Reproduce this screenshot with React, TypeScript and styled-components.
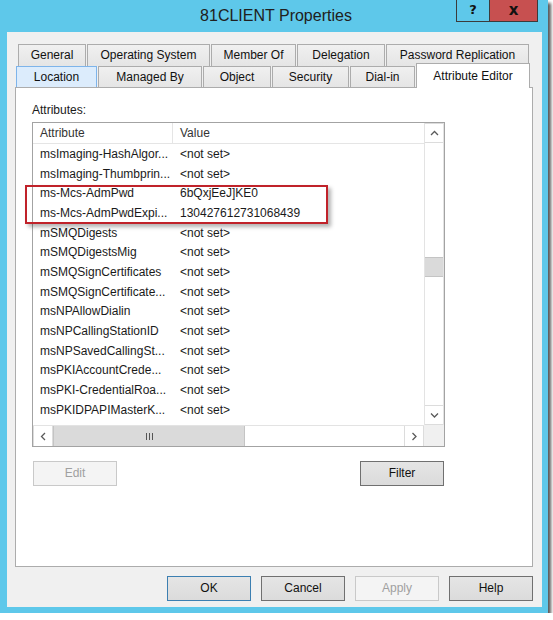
import { FC, ReactElement } from 'react'
import styled, { createGlobalStyle } from 'styled-components'

const FRAME_BLUE = '#5ec8ea'

type Attr = { name: string, value: string }

const attributes: Attr[] = [
  { name: 'msImaging-HashAlgor...', value: '<not set>' },
  { name: 'msImaging-Thumbprin...', value: '<not set>' },
  { name: 'ms-Mcs-AdmPwd', value: '6bQxjEeJ]KE0' },
  { name: 'ms-Mcs-AdmPwdExpi...', value: '130427612731068439' },
  { name: 'mSMQDigests', value: '<not set>' },
  { name: 'mSMQDigestsMig', value: '<not set>' },
  { name: 'mSMQSignCertificates', value: '<not set>' },
  { name: 'mSMQSignCertificate...', value: '<not set>' },
  { name: 'msNPAllowDialin', value: '<not set>' },
  { name: 'msNPCallingStationID', value: '<not set>' },
  { name: 'msNPSavedCallingSt...', value: '<not set>' },
  { name: 'msPKIAccountCrede...', value: '<not set>' },
  { name: 'msPKI-CredentialRoa...', value: '<not set>' },
  { name: 'msPKIDPAPIMasterK...', value: '<not set>' }
]

const backTabs = [
  { label: 'General', width: 68 },
  { label: 'Operating System', width: 123 },
  { label: 'Member Of', width: 85 },
  { label: 'Delegation', width: 88 },
  { label: 'Password Replication', width: 143 }
]

const frontTabs = [
  { label: 'Location', width: 81, hover: true },
  { label: 'Managed By', width: 104 },
  { label: 'Object', width: 68 },
  { label: 'Security', width: 77 },
  { label: 'Dial-in', width: 65 },
  { label: 'Attribute Editor', width: 114, selected: true }
]

const Chevron: FC<{ dir: 'up' | 'down' | 'left' | 'right' }> = ({ dir }) => {
  const points = {
    up: '1,5 4.5,1.5 8,5',
    down: '1,1.5 4.5,5 8,1.5',
    left: '5,1 1.5,4.5 5,8',
    right: '1.5,1 5,4.5 1.5,8'
  }[dir]
  const vertical = dir === 'up' || dir === 'down'
  return (
    <svg width={vertical ? 9 : 7} height={vertical ? 7 : 9}>
      <polyline points={points} fill='none' stroke='#5a5a5a' strokeWidth='1.3' />
    </svg>
  )
}

const App: FC = (): ReactElement => {
  return (
    <>
      <GlobalStyle />
      <Window>
        <TitleBar>
          <Title>81CLIENT Properties</Title>
          <CaptionButtons>
            <CaptionButton>?</CaptionButton>
            <CaptionButton $close>x</CaptionButton>
          </CaptionButtons>
        </TitleBar>
        <Client>
          <TabRow $back>
            {backTabs.map(t => (
              <Tab key={t.label} $width={t.width}>{t.label}</Tab>
            ))}
          </TabRow>
          <TabRow>
            {frontTabs.map(t => (
              <Tab key={t.label} $width={t.width} $front $hover={t.hover} $selected={t.selected}>
                {t.label}
              </Tab>
            ))}
          </TabRow>
          <Page>
            <Label>Attributes:</Label>
            <ListView>
              <ListBody>
                <Header>
                  <HeaderCell $first>Attribute</HeaderCell>
                  <HeaderCell>Value</HeaderCell>
                </Header>
                {attributes.map(a => (
                  <Row key={a.name}>
                    <Cell $first>{a.name}</Cell>
                    <Cell>{a.value}</Cell>
                  </Row>
                ))}
              </ListBody>
              <VScroll>
                <ArrowButton><Chevron dir='up' /></ArrowButton>
                <VTrack>
                  <VThumb />
                </VTrack>
                <ArrowButton><Chevron dir='down' /></ArrowButton>
              </VScroll>
              <HScroll>
                <ArrowButton $horizontal><Chevron dir='left' /></ArrowButton>
                <HThumb>
                  <Grip /><Grip /><Grip />
                </HThumb>
                <HTrack />
                <ArrowButton $horizontal><Chevron dir='right' /></ArrowButton>
              </HScroll>
              <Corner />
              <Highlight />
            </ListView>
            <ActionRow>
              <Button disabled>Edit</Button>
              <Button>Filter</Button>
            </ActionRow>
          </Page>
          <Footer>
            <Button $default>OK</Button>
            <Button>Cancel</Button>
            <Button disabled>Apply</Button>
            <Button>Help</Button>
          </Footer>
        </Client>
      </Window>
    </>
  )
}

const GlobalStyle = createGlobalStyle`
  html, body {
    margin: 0;
    padding: 0;
    background: #fff;
  }
  body {
    font-family: 'Liberation Sans', Arial, sans-serif;
    font-size: 12px;
    color: #1a1a1a;
  }
  * { box-sizing: border-box; }
`
const Window = styled.div`
  width: 548px;
  height: 613px;
  background: ${FRAME_BLUE};
  box-shadow: 3px 3px 3px rgba(0,0,0,0.65);
  display: flex;
  flex-direction: column;
`
const TitleBar = styled.div`
  height: 32px;
  display: grid;
  grid-template-columns: 1fr auto 1fr;
  align-items: start;
`
const Title = styled.div`
  grid-column: 2;
  padding-left: 4px;
  font-size: 16px;
  line-height: 32px;
  color: #202020;
`
const CaptionButtons = styled.div`
  grid-column: 3;
  justify-self: end;
  display: flex;
  margin-right: 10px;
`
const CaptionButton = styled.div<{ $close?: boolean }>`
  width: ${p => p.$close ? 48 : 34}px;
  height: 22px;
  border: 1px solid #3b3b3b;
  border-top: none;
  ${p => p.$close && 'border-left: none;'}
  background: ${p => p.$close ? '#c75050' : FRAME_BLUE};
  display: flex;
  align-items: center;
  justify-content: center;
  font-weight: bold;
  font-family: 'DejaVu Sans', sans-serif;
  font-size: ${p => p.$close ? 15 : 13}px;
  line-height: 18px;
  color: #111;
  padding-bottom: ${p => p.$close ? 2 : 1}px;
`
const Client = styled.div`
  flex: 1;
  margin: 0 6px 6px 7px;
  background: #f0f0f0;
  padding: 12px 9px 0 8px;
  display: flex;
  flex-direction: column;
`
const TabRow = styled.div<{ $back?: boolean }>`
  display: flex;
  gap: 1px;
  height: ${p => p.$back ? 22 : 21}px;
  margin-left: ${p => p.$back ? 3 : 1}px;
`
const Tab = styled.div<{ $width: number, $front?: boolean, $hover?: boolean, $selected?: boolean }>`
  width: ${p => p.$width}px;
  height: ${p => p.$selected ? 25 : p.$front ? 21 : 22}px;
  margin-top: ${p => p.$selected ? -3 : 0}px;
  align-self: flex-start;
  display: flex;
  align-items: center;
  justify-content: center;
  padding-bottom: 1px;
  border: 1px solid ${p => p.$hover ? '#7eb4ea' : '#acacac'};
  border-bottom: none;
  background: ${p => p.$selected ? '#fff' : p.$hover ? '#dcecfc' : 'linear-gradient(#f0f0f0, #e5e5e5)'};
  color: #111;
  white-space: nowrap;
  ${p => p.$selected && 'position: relative; z-index: 1;'}
`
const Page = styled.div`
  width: 518px;
  height: 480px;
  background: #fff;
  border: 1px solid #acacac;
  padding: 15px 0 0 16px;
  display: flex;
  flex-direction: column;
`
const Label = styled.div`
  line-height: 14px;
  margin-bottom: 5px;
`
const ListView = styled.div`
  position: relative;
  width: 413px;
  height: 325px;
  border: 1px solid #a3a3a3;
  display: grid;
  grid-template-columns: 391px 20px;
  grid-template-rows: 302px 21px;
`
const ListBody = styled.div`
  overflow: hidden;
`
const Header = styled.div`
  display: flex;
  height: 21px;
  border-bottom: 1px solid #e5e5e5;
  color: #333;
`
const HeaderCell = styled.div<{ $first?: boolean }>`
  width: ${p => p.$first ? 140 : 251}px;
  padding-left: 7px;
  line-height: 20px;
  ${p => p.$first && 'border-right: 1px solid #e5e5e5;'}
`
const Row = styled.div`
  display: flex;
  height: 19.7px;
  align-items: center;
`
const Cell = styled.div<{ $first?: boolean }>`
  width: ${p => p.$first ? 140 : 251}px;
  padding-left: 7px;
  white-space: nowrap;
  overflow: hidden;
`
const VScroll = styled.div`
  display: flex;
  flex-direction: column;
  border-left: 1px solid #e3e3e3;
  border-right: 1px solid #e3e3e3;
`
const ArrowButton = styled.div<{ $horizontal?: boolean }>`
  flex: 0 0 20px;
  display: flex;
  align-items: center;
  justify-content: center;
  background: #fff;
  border: 1px solid #dcdcdc;
  ${p => p.$horizontal ? 'border-top: none; border-bottom: none;' : 'border-left: none; border-right: none;'}
`
const VTrack = styled.div`
  flex: 1;
  padding-top: 114px;
`
const VThumb = styled.div`
  height: 20px;
  background: #dadada;
  border-top: 1px solid #c4c4c4;
  border-bottom: 1px solid #c4c4c4;
`
const HScroll = styled.div`
  display: flex;
  border-top: 1px solid #e3e3e3;
`
const HThumb = styled.div`
  flex: 0 0 192px;
  display: flex;
  align-items: center;
  justify-content: center;
  gap: 2px;
  background: #dadada;
  border-left: 1px solid #c4c4c4;
  border-right: 1px solid #c4c4c4;
`
const Grip = styled.div`
  width: 1px;
  height: 7px;
  background: #555;
`
const HTrack = styled.div`
  flex: 1;
  background: #fff;
`
const Corner = styled.div`
  background: #f0f0f0;
`
const Highlight = styled.div`
  position: absolute;
  left: -8px;
  top: 62px;
  width: 303px;
  height: 39px;
  border: 2px solid #c0222a;
  box-shadow: 3px 3px 4px rgba(0,0,0,0.3);
  pointer-events: none;
`
const ActionRow = styled.div`
  display: flex;
  justify-content: space-between;
  width: 411px;
  margin: 14px 0 0 1px;
`
const Button = styled.button<{ $default?: boolean }>`
  width: 84px;
  height: 25px;
  padding: 0 0 1px;
  font-family: 'Liberation Sans', Arial, sans-serif;
  font-size: 12px;
  color: #111;
  background: linear-gradient(#e5e5e5, #dbdbdb);
  border: 1px solid ${p => p.$default ? '#3c7fb1' : '#707070'};
  border-radius: 0;

  &:disabled {
    color: #a0a0a0;
    background: #f4f4f4;
    border-color: #c9c9c9;
  }
`
const Footer = styled.div`
  display: flex;
  justify-content: flex-end;
  gap: 10px;
  margin-top: 9px;
`

export default App
